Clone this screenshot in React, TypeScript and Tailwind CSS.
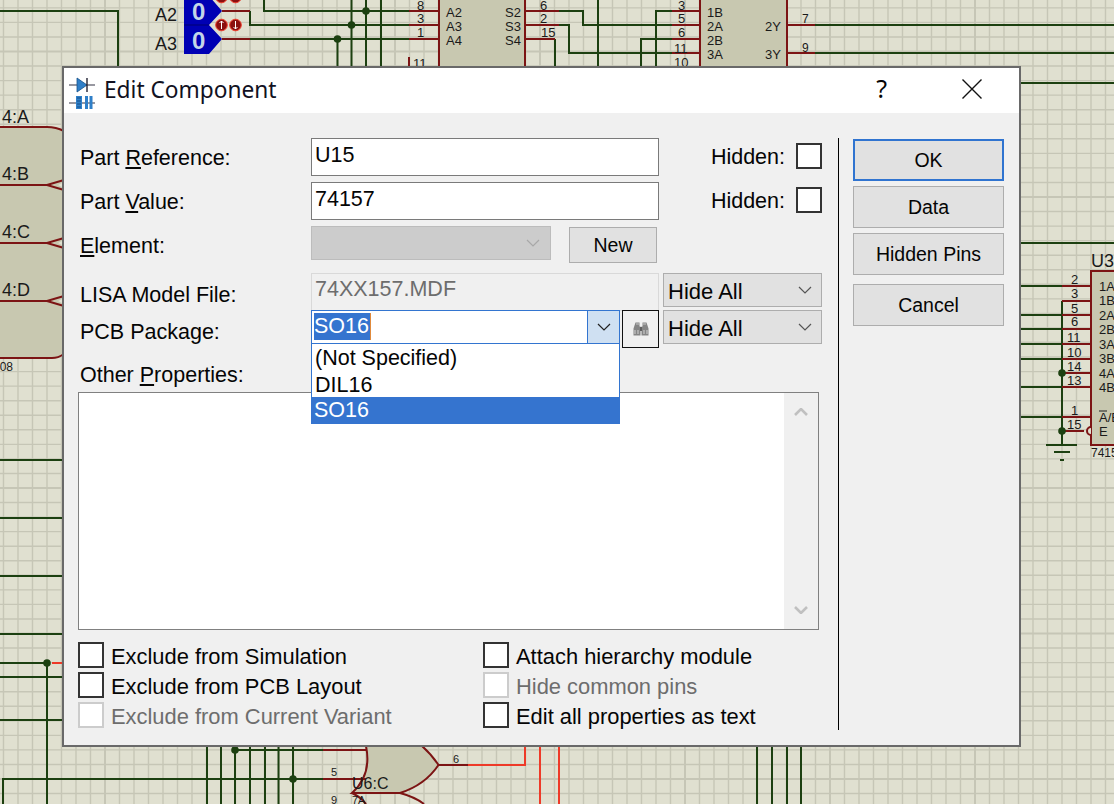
import type { ReactNode } from 'react';

const GREEN = '#1c4010';
const PIN = '#7c1414';
const HOT = '#ee3a28';
const CHIP = '#c8c8b0';
const INK = '#1a1a1a';

const greenWires = [
  'M0 11H118V67',
  'M250 11V25H409',
  'M264 0V11H409',
  'M250 39H409',
  'M337.5 39V67',
  'M351.5 0V67',
  'M366 0V67',
  'M381 0V67',
  'M559 11H583V25H672',
  'M559 25H569V53H672',
  'M555 39V67',
  'M598 0V67',
  'M656 67V11H672',
  'M641 67V39H672',
  'M815 25H1114',
  'M815 53H1114',
  'M1020 83H1114',
  'M1020 243H1114',
  'M1020 286H1062',
  'M1020 315H1062',
  'M1020 329H1062',
  'M1020 344H1062',
  'M1020 359H1062',
  'M1020 387H1062',
  'M1020 417H1062',
  'M1062 301V445',
  'M1046 445H1077',
  'M0 460H62',
  'M0 518H62',
  'M0 576H62',
  'M0 634H62',
  'M0 663H47',
  'M0 677H62',
  'M0 720H62',
  'M47 663V804',
  'M3 804V779H323',
  'M235 750H323',
  'M207 746V804',
  'M221 746V804',
  'M235 746V804',
  'M250 746V804',
  'M265 746V804',
  'M278.5 746V804',
  'M293 746V804',
  'M757 746V804',
  'M772 746V804',
  'M787 746V804',
  'M801 746V804',
];

const pinWires = [
  'M222 11H250',
  'M222 39H250',
  'M409 11H439',
  'M409 25H439',
  'M409 39H439',
  'M409 57V67',
  'M525 11H559',
  'M525 25H559',
  'M525 39H555',
  'M672 11H700',
  'M672 25H700',
  'M672 39H700',
  'M672 53H700',
  'M787 25H815',
  'M787 53H815',
  'M1062 286H1091',
  'M1062 301H1091',
  'M1062 315H1091',
  'M1062 329H1091',
  'M1062 344H1091',
  'M1062 359H1091',
  'M1062 373H1091',
  'M1062 387H1091',
  'M1062 417H1091',
  'M1062 431H1084',
  'M323 750H366',
  'M323 779H366',
  'M438 765H468',
];

const dots: [number, number][] = [
  [366, 11], [351.5, 25], [337.5, 39], [1062, 373], [1062, 431], [47, 663], [235, 750], [293, 779],
];

const labels: [number, number, string, number][] = [
  [155, 21, 'A2', 18], [155, 50, 'A3', 18],
  [417, 10, '8', 13], [417, 23, '3', 13], [417, 37, '1', 13], [413, 68, '11', 13],
  [446, 17, 'A2', 13], [446, 31, 'A3', 13], [446, 45, 'A4', 13],
  [505, 17, 'S2', 13], [505, 31, 'S3', 13], [505, 45, 'S4', 13],
  [540, 10, '6', 13], [540, 23, '2', 13], [541, 37, '15', 13],
  [678, 10, '3', 13], [678, 23, '5', 13], [678, 37, '6', 13], [674, 53, '11', 13], [674, 67, '10', 13],
  [707, 17, '1B', 13], [707, 31, '2A', 13], [707, 45, '2B', 13], [707, 59, '3A', 13],
  [765, 31, '2Y', 13], [765, 59, '3Y', 13],
  [802, 23, '7', 12], [802, 52, '9', 12],
  [2, 123, '4:A', 18], [2, 180, '4:B', 18], [2, 238, '4:C', 18], [2, 296, '4:D', 18], [-7, 371, '508', 12],
  [1091, 267, 'U3', 18],
  [1071, 284, '2', 13], [1071, 298, '3', 13], [1071, 313, '5', 13], [1071, 326, '6', 13],
  [1067, 342, '11', 13], [1067, 357, '10', 13], [1067, 371, '14', 13], [1067, 385, '13', 13],
  [1071, 415, '1', 13], [1067, 429, '15', 13],
  [1099, 291, '1A', 13], [1099, 305, '1B', 13], [1099, 320, '2A', 13], [1099, 334, '2B', 13],
  [1099, 349, '3A', 13], [1099, 363, '3B', 13], [1099, 378, '4A', 13], [1099, 392, '4B', 13],
  [1099, 422, 'A/B', 13], [1099, 436, 'E', 13], [1091, 457, '7415', 12],
  [331, 776, '5', 11], [331, 804, '9', 11], [352, 804, '7A', 11], [453, 763, '6', 11], [352, 789, 'U6:C', 16],
];

function Schematic() {
  const cols = Array.from({ length: 78 }, (_, i) => 685 - 14.5 * 47 + 14.5 * i);
  const rows = Array.from({ length: 56 }, (_, i) => 488 - 14.55 * 33 + 14.55 * i);
  return (
    <svg className="absolute inset-0" width="1114" height="804" viewBox="0 0 1114 804">
      {cols.map((x, i) => (
        <line key={x} x1={x} y1="0" x2={x} y2="804" stroke="#c6c6b6" strokeWidth={(i - 47) % 10 === 0 ? 2 : 1.4} />
      ))}
      {rows.map((y, i) => (
        <line key={y} x1="0" y1={y} x2="1114" y2={y} stroke="#c6c6b6" strokeWidth={(i - 33) % 10 === 0 ? 2 : 1.4} />
      ))}

      {/* chips */}
      <rect x="439" y="-4" width="86" height="80" fill={CHIP} stroke={PIN} strokeWidth="2" />
      <rect x="700" y="-4" width="87" height="80" fill={CHIP} stroke={PIN} strokeWidth="2" />
      <rect x="1091" y="271" width="40" height="174" fill={CHIP} stroke={PIN} strokeWidth="2" />
      <path d="M0 127H47Q56 127 64 131V355Q56 358 52 358H0Z" fill={CHIP} />
      <path d="M0 127H47Q56 127 64 131M0 185H47L64 180M47 185L64 190M0 243H47L64 238M47 243L64 248M0 301H47L64 296M47 301L64 306M0 358H52Q58 358 64 354" fill="none" stroke={PIN} strokeWidth="2" />
      <path d="M58 185L64 182V188ZM58 243L64 240V246ZM58 301L64 298V304Z" fill="#e0e0d0" />

      {/* or gates below the dialog */}
      <path d="M352 793Q372 775 366 746H422Q432 755 438.5 765Q425 785 400 793Q375 790 352 793Z" fill={CHIP} />
      <path d="M366 746Q372 775 352 793H400Q425 785 438.5 765Q432 755 422 746" fill="none" stroke={PIN} strokeWidth="2" />
      <path d="M366 804Q362 798 352 793M400 793Q415 797 424 804" fill={CHIP} stroke={PIN} strokeWidth="2" />

      {greenWires.map((d) => (
        <path key={d} d={d} fill="none" stroke={GREEN} strokeWidth="2" />
      ))}
      {pinWires.map((d) => (
        <path key={d} d={d} fill="none" stroke={PIN} strokeWidth="2" />
      ))}
      <path d="M468 765H525V746M540 746V804M559 746V804M52 663H64" fill="none" stroke={HOT} strokeWidth="2" />
      {dots.map(([x, y]) => (
        <circle key={`${x}-${y}`} cx={x} cy={y} r="3.8" fill={GREEN} />
      ))}
      <path d="M1054 452H1070" stroke={GREEN} strokeWidth="2" />
      <path d="M1060 460H1064" stroke={GREEN} strokeWidth="2" />
      <path d="M1091 427A4 4 0 0 0 1091 435" fill="#e0e0d0" stroke={PIN} strokeWidth="2" />
      <path d="M1099 411H1107" stroke={INK} strokeWidth="1" />

      {/* logic state probes */}
      <path d="M184 -4H209L222 11L209 25H184ZM184 25H209L222 39L209 54H184Z" fill="#0000b4" />
      <path d="M184 25H209" stroke="#000070" strokeWidth="1" />
      <text x="192" y="20" fontSize="24" fontWeight="700" fill="#c4d4e8">0</text>
      <text x="192" y="49" fontSize="24" fontWeight="700" fill="#c4d4e8">0</text>
      {[221.5, 235.5].map((x, i) => (
        <g key={x}>
          <circle cx={x} cy="25" r="5.8" fill="#8a1010" stroke="#f03a2a" strokeWidth="1" />
          <path d={i === 0 ? `M${x} 29V21M${x - 2} 23L${x} 21L${x + 2} 23` : `M${x} 21V29M${x - 2} 27L${x} 29L${x + 2} 27`} stroke="#fff" strokeWidth="1" fill="none" />
          <circle cx={x} cy="-3" r="5.8" fill="#8a1010" stroke="#f03a2a" strokeWidth="1" />
        </g>
      ))}

      {labels.map(([x, y, t, s]) => (
        <text key={`${x}-${y}-${t}`} x={x} y={y} fontSize={s} fill={INK}>{t}</text>
      ))}
    </svg>
  );
}

function Chevron({ className, up, bold }: { className: string; up?: boolean; bold?: boolean }) {
  return (
    <svg width="14" height="8" viewBox="0 0 14 8" className={className}>
      <path d={up ? 'M1 7L7 1L13 7' : 'M1 1L7 7L13 1'} fill="none" stroke="currentColor" strokeWidth={bold ? 2.6 : 1.2} />
    </svg>
  );
}

function CheckBox({ disabled }: { disabled?: boolean }) {
  return <span className={`block w-[26px] h-[26px] shrink-0 bg-white border-2 ${disabled ? 'border-[#cccccc]' : 'border-[#333333]'}`} />;
}

function Check({ label, disabled }: { label: string; disabled?: boolean }) {
  return (
    <div className="flex items-center h-[26px]">
      <CheckBox disabled={disabled} />
      <span className={`ml-[7px] pt-[3px] text-[21.9px] leading-none ${disabled ? 'text-[#6d6d6d]' : ''}`}>{label}</span>
    </div>
  );
}

function Label({ children, top }: { children: ReactNode; top: string }) {
  return <div className={`w-[233px] pl-[2px] shrink-0 leading-none ${top}`}>{children}</div>;
}

function TextField({ value }: { value: string }) {
  return (
    <div className="w-[348px] h-[38px] shrink-0 bg-white border border-[#7a7a7a] pl-[3px] flex items-start pt-[4px] leading-[24px]">{value}</div>
  );
}

function Hidden() {
  return (
    <div className="ml-auto flex items-center h-[36px]">
      <span className="mr-[11px] pt-[3px] leading-none">Hidden:</span>
      <CheckBox />
    </div>
  );
}

function HideAll({ className }: { className: string }) {
  return (
    <div className={`w-[159px] h-[34px] bg-[#e1e1e1] border border-[#adadad] flex items-center pl-[4px] pr-[9px] justify-between ${className}`}>
      <span className="pt-[3px] text-[22px] leading-none">Hide All</span>
      <Chevron className="text-[#555555]" />
    </div>
  );
}

function SideButton({ children, className }: { children: ReactNode; className: string }) {
  return (
    <div className={`w-[151px] h-[42px] pt-[2px] flex items-center justify-center bg-[#e1e1e1] text-[19.5px] leading-none ${className}`}>{children}</div>
  );
}

function Dialog() {
  return (
    <div className="absolute left-[62px] top-[66px] w-[959px] h-[681px] border-2 border-[#696969] bg-[#f0f0f0] flex flex-col text-[21.5px] text-[#050505]">
      <div className="h-[45px] bg-white shrink-0 flex items-center pl-[5px] pr-[37px]">
        <svg width="28" height="36" viewBox="0 0 28 36" className="shrink-0">
          <path d="M0 12H26M0 30H26" stroke="#333344" strokeWidth="1.2" />
          <path d="M8 5L18 12L8 19Z" fill="#2f7fc8" stroke="#14508a" strokeWidth="0.8" />
          <path d="M18 5V19" stroke="#222233" strokeWidth="1.4" />
          <rect x="7" y="23" width="6" height="14" fill="#2f7fc8" />
          <path d="M8 25h4M8 28h4M8 31h4M8 34h4" stroke="#14508a" strokeWidth="1" />
          <rect x="16" y="23" width="3" height="14" fill="#2f7fc8" />
          <rect x="20.5" y="23" width="3" height="14" fill="#2f7fc8" />
        </svg>
        <span className="ml-[7px] text-[22.7px] leading-none font-['Noto_Sans',sans-serif] text-[#111122]">Edit Component</span>
        <span className="ml-auto mb-[4px] text-[25px] leading-none font-['Noto_Sans',sans-serif]">?</span>
        <svg width="20" height="20" viewBox="0 0 20 20" className="ml-[75px] mb-[4px]">
          <path d="M0.5 0.5L19.5 19.5M19.5 0.5L0.5 19.5" stroke="#111111" strokeWidth="1.4" />
        </svg>
      </div>

      <div className="flex-1 flex">
        <div className="w-[774px] shrink-0 pl-[14px] pr-[16px] pt-[25px]">
          <div className="flex items-start">
            <Label top="pt-[10px]">
              Part <span className="underline underline-offset-2">R</span>eference:
            </Label>
            <TextField value="U15" />
            <Hidden />
          </div>
          <div className="flex items-start mt-[6px]">
            <Label top="pt-[10px]">
              Part <span className="underline underline-offset-2">V</span>alue:
            </Label>
            <TextField value="74157" />
            <Hidden />
          </div>
          <div className="flex items-start mt-[6px] h-[37px]">
            <Label top="pt-[10px]">
              <span className="underline underline-offset-2">E</span>lement:
            </Label>
            <div className="w-[240px] h-[34px] bg-[#cccccc] border border-[#bcbcbc] flex items-center justify-end pr-[10px]">
              <Chevron className="text-[#a8a8a8]" />
            </div>
            <div className="ml-[18px] w-[88px] h-[36px] mt-[1px] pt-[2px] bg-[#e1e1e1] border border-[#adadad] flex items-center justify-center text-[19.5px] leading-none">New</div>
          </div>
          <div className="flex items-start mt-[10px] h-[37px]">
            <Label top="pt-[12px]">LISA Model File:</Label>
            <div className="w-[348px] h-[38px] shrink-0 bg-[#f0f0f0] border border-[#d9d9d9] pl-[3px] pt-[3px] leading-[24px] text-[#6d6d6d]">74XX157.MDF</div>
            <HideAll className="ml-[4px]" />
          </div>
          <div className="relative flex items-start h-[38px]">
            <Label top="pt-[12px]">PCB Package:</Label>
            <div className="w-[309px] h-[34px] shrink-0 bg-white border border-[#3375d0] flex items-stretch">
              <div className="flex-1 pl-[2px] pt-[2px]">
                <span className="block w-[57px] h-[27px] leading-[27px] bg-[#3574cf] text-white border-r border-[#e08a3c]">SO16</span>
              </div>
              <div className="w-[32px] bg-[#cfe0f2] border-l border-[#3375d0] flex items-center justify-center">
                <Chevron className="text-[#222222]" />
              </div>
            </div>
            <div className="ml-[2px] w-[37px] h-[38px] border border-[#111111] flex items-center justify-center shrink-0">
              <svg width="16" height="14" viewBox="0 0 16 14">
                <path d="M2.5 0.5H6.5V4.5H7.5V13.5H0.5V6.5ZM13.5 0.5H9.5V4.5H8.5V13.5H15.5V6.5Z" fill="#858585" />
                <path d="M7 5H9V9H7Z" fill="#5f5f5f" />
                <path d="M2 8V12M5 8V12M11 8V12M14 8V12" stroke="#d4d4d4" strokeWidth="1" />
                <path d="M3 2H6M10 2H13" stroke="#c8c8c8" strokeWidth="1" />
              </svg>
            </div>
            <HideAll className="ml-[4px]" />
            {/* open combo list */}
            <div className="absolute left-[233px] top-[34px] w-[309px] h-[80px] z-10 bg-white border-x border-[#3375d0] flex flex-col leading-none">
              <div className="h-[27px] pl-[3px] pt-[3px] flex items-center">(Not Specified)</div>
              <div className="h-[26px] pl-[3px] pt-[3px] flex items-center">DIL16</div>
              <div className="h-[27px] -mx-px pl-[3px] pt-[1px] flex items-center bg-[#3574cf] text-white">SO16</div>
            </div>
          </div>
          <div className="pl-[2px] mt-[17px] h-[21px] leading-[21px]">
            Other <span className="underline underline-offset-2">P</span>roperties:
          </div>
          <div className="mt-[6px] w-[741px] h-[238px] bg-white border border-[#808080] flex justify-end">
            <div className="w-[34px] bg-[#f0f0f0] flex flex-col items-center justify-between pt-[15px] pb-[15px] text-[#c0c0c0]">
              <Chevron up bold className="" />
              <Chevron bold className="" />
            </div>
          </div>
          <div className="mt-[12px] grid grid-cols-[405px_1fr] gap-y-[4px]">
            <Check label="Exclude from Simulation" />
            <Check label="Attach hierarchy module" />
            <Check label="Exclude from PCB Layout" />
            <Check label="Hide common pins" disabled />
            <Check label="Exclude from Current Variant" disabled />
            <Check label="Edit all properties as text" />
          </div>
        </div>

        <div className="mt-[25px] h-[592px] w-px bg-black shrink-0" />

        <div className="pl-[14px] pt-[26px] flex flex-col">
          <SideButton className="border-2 border-[#3074d0]">OK</SideButton>
          <SideButton className="mt-[5px] border border-[#adadad]">Data</SideButton>
          <SideButton className="mt-[5px] border border-[#adadad]">Hidden Pins</SideButton>
          <SideButton className="mt-[9px] border border-[#adadad]">Cancel</SideButton>
        </div>
      </div>
    </div>
  );
}

export default function App() {
  return (
    <div className="relative w-[1114px] h-[804px] overflow-hidden bg-[#e0e0d0] font-['Liberation_Sans',sans-serif]">
      <Schematic />
      <Dialog />
    </div>
  );
}
